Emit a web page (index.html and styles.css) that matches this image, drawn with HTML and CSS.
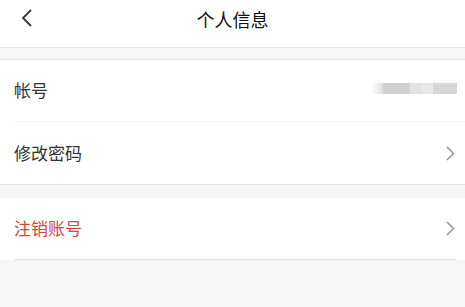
FILE: index.html
```html
<!DOCTYPE html>
<html lang="zh">
<head>
<meta charset="utf-8">
<link rel="stylesheet" href="styles.css">
</head>
<body>
<header class="nav">
  <span class="back"><svg width="12" height="18" viewBox="0 0 12 18"><path d="M10 1 L2 9 L10 17" fill="none" stroke="#333" stroke-width="1.8"/></svg></span>
  <h1 class="title">个人信息</h1>
</header>
<div class="gap gap-top"></div>
<section class="group">
  <div class="row">
    <span class="label">帐号</span>
    <span class="mask">
      <i class="m m1"></i><i class="m m2"></i><i class="m m3"></i><i class="m m4"></i><i class="m m5"></i>
    </span>
  </div>
  <div class="row">
    <span class="label">修改密码</span>
    <svg class="arrow" width="9" height="15" viewBox="0 0 9 15"><path d="M1 1 L7.5 7.5 L1 14" fill="none" stroke="#999" stroke-width="1.6"/></svg>
  </div>
</section>
<div class="gap gap-mid"></div>
<section class="group group-last">
  <div class="row row-last">
    <span class="label danger">注销账号</span>
    <svg class="arrow" width="9" height="15" viewBox="0 0 9 15"><path d="M1 1 L7.5 7.5 L1 14" fill="none" stroke="#999" stroke-width="1.6"/></svg>
  </div>
</section>
</body>
</html>
```
FILE: styles.css
```css
html, body {
  margin: 0;
  padding: 0;
  background: #f6f6f6;
  font-family: "Noto Sans CJK SC", "Noto Sans", sans-serif;
  width: 465px;
  height: 307px;
  overflow: hidden;
}
.nav {
  height: 47px;
  background: #fff;
  border-bottom: 1px solid #e6e6e6;
  display: flex;
  align-items: center;
  justify-content: center;
  position: relative;
}
.back {
  position: absolute;
  left: 21px;
  top: 9px;
  display: flex;
}
.title {
  margin: 0;
  font-size: 18px;
  font-weight: 400;
  color: #111;
  margin-top: -9px;
}
.gap-top {
  height: 11px;
  border-bottom: 1px solid #e4e4e4;
}
.gap-mid {
  height: 13px;
}
.group {
  background: #fff;
  padding-left: 14px;
  border-bottom: 1px solid #e2e2e2;
}
.group-last {
  border-bottom: none;
  padding-right: 9px;
}
.row {
  height: 61px;
  display: flex;
  align-items: center;
  justify-content: space-between;
  padding-right: 10px;
  border-bottom: 1px solid #f2f2f2;
}
.row:last-child {
  border-bottom: none;
  height: 62px;
}
.row-last.row {
  border-bottom: 1px solid #e4e4e4;
  padding-right: 1px;
  height: 61px;
}
.label {
  font-size: 17px;
  color: #333;
  line-height: 1;
  margin-top: -2px;
}
.danger {
  color: #d9473b;
}
.mask {
  display: flex;
  align-items: center;
  margin-top: -4px;
  margin-right: -2px;
}
.m {
  display: block;
  height: 11px;
}
.m1 { width: 12px; background: linear-gradient(90deg, #fff, #e0e0e0); }
.m2 { width: 27px; background: #d2d2d2; }
.m3 { width: 11px; background: #e2e2e2; }
.m4 { width: 12px; background: #e8e8e8; }
.m5 { width: 24px; background: #d6d6d6; }
.arrow {
  display: block;
}
```
